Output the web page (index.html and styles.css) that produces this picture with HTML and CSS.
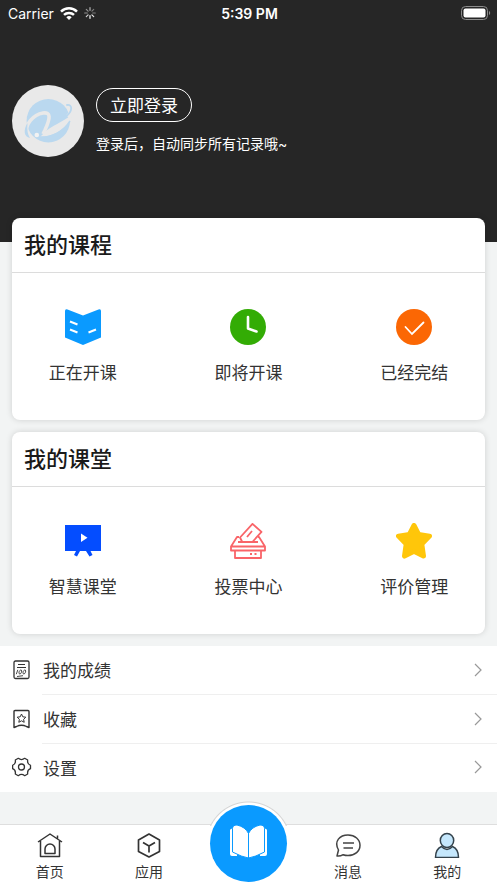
FILE: index.html
```html
<!DOCTYPE html>
<html lang="zh-CN">
<head>
<meta charset="utf-8">
<meta name="viewport" content="width=device-width, initial-scale=1">
<title>我的</title>
<link rel="stylesheet" href="styles.css">
</head>
<body>
<header class="hero">
  <div class="status">
    <div class="status-left">
      <span>Carrier</span>
      <svg width="18" height="13" viewBox="0 0 18 13" fill="none" stroke="#fff" stroke-width="2.5"><path d="M1 4.6a11.5 11.5 0 0 1 16 0M4 7.9a7.2 7.2 0 0 1 10 0"/><path d="M9 13 6.3 10.2a3.9 3.9 0 0 1 5.4 0z" fill="#fff" stroke="none"/></svg>
      <svg width="12" height="12" viewBox="0 0 12 12" stroke="#fff" stroke-width="1.2" stroke-linecap="round"><path d="M6 .7v2.6" opacity=".65"/><path d="m9.7 2.3-1.8 1.8" opacity=".4"/><path d="M11.3 6H8.7" opacity=".4"/><path d="M9.7 9.7 7.9 7.9" opacity=".9"/><path d="M6 11.3V8.7"/><path d="m2.3 9.7 1.8-1.8" opacity=".8"/><path d="M.7 6h2.6" opacity=".5"/><path d="m2.3 2.3 1.8 1.8" opacity=".5"/></svg>
    </div>
    <time class="clock">5:39 PM</time>
    <svg class="battery" width="30" height="14" viewBox="0 0 30 14"><rect x=".5" y=".5" width="26" height="13" rx="4" fill="none" stroke="#8c8c8c"/><rect x="2.5" y="2.5" width="22" height="9" rx="2" fill="#fff"/><path d="M28 5c1.600.500 1.600 3.500 0 4z" fill="#8c8c8c"/></svg>
  </div>
  <div class="profile">
    <svg class="avatar" viewBox="0 0 72 72"><circle cx="36" cy="36" r="36" fill="#e9e9e9"/><circle cx="36.300" cy="35.700" r="21.700" fill="#bad8ef"/><path d="M15 50C12 39 22 29.500 31 28c8-1 7.500 5 2 17l-2 4" fill="none" stroke="#e9e9e9" stroke-width="3.600"/><path d="M28 52C43 51 58 43 61 28C54 36 44 38 34 46z" fill="#e9e9e9"/><path d="M54 20C60 18 63 25 56 32" fill="none" stroke="#e9e9e9" stroke-width="5"/><path d="M55 20C60.500 19 61 26 54 31.500" fill="none" stroke="#bad8ef" stroke-width="1.800" stroke-linecap="round"/><path d="M15.500 38C11 45 12 52 18 53Q14.500 48 15.500 38z" fill="#bad8ef"/><path d="M27 52C40 53 52 46 58 36" fill="none" stroke="#bad8ef" stroke-width="1.500"/><circle cx="24.800" cy="50" r="2.300" fill="#f2f2f2"/></svg>
    <div class="signin">
      <button class="login" type="button">立即登录</button>
      <p>登录后，自动同步所有记录哦~</p>
    </div>
  </div>
</header>
<main>
  <section class="card">
    <h2>我的课程</h2>
    <div class="tiles">
      <a class="tile" href="#ongoing"><svg viewBox="0 0 36 36"><path d="M0 2Q0-.5 2.500.400L18 6.500 33.500.400Q36-.5 36 2V28.500L18 36 0 28.500z" fill="#0a9aff"/><path d="m5 12.500 7.500 3M5 20.500l7.500 3M31 20.500l-7.500 3" stroke="#fff" stroke-width="2"/></svg><span>正在开课</span></a>
      <a class="tile" href="#upcoming"><svg viewBox="0 0 36 36"><circle cx="18" cy="18" r="18" fill="#33ac05"/><path d="M18 8v11.500l8.500 3" fill="none" stroke="#fff" stroke-width="2.600" stroke-linecap="round" stroke-linejoin="round"/></svg><span>即将开课</span></a>
      <a class="tile" href="#finished"><svg viewBox="0 0 36 36"><circle cx="18" cy="18" r="18" fill="#fb6704"/><path d="m9.500 18 6.500 7 11.500-11.500" fill="none" stroke="#fff" stroke-width="1.800" stroke-linecap="round"/></svg><span>已经完结</span></a>
    </div>
  </section>
  <section class="card">
    <h2>我的课堂</h2>
    <div class="tiles">
      <a class="tile" href="#smart"><svg viewBox="0 0 36 36"><path d="M0 2h36v26H25.500l2 4-3 1.500L21 28h-6l-3 5.500L9 32l2-4H0z" fill="#044dff"/><path d="m16 10.500 6.500 4.300-6.500 4.300z" fill="#fff"/></svg><span>智慧课堂</span></a>
      <a class="tile" href="#vote"><svg viewBox="0 0 36 36" fill="none" stroke="#f96468" stroke-width="1.800" stroke-linejoin="round"><path d="M9 14H7L1 23.500h34L29 14h-1M1 23.500v4h34v-4M5 28v7h26v-7M8 19h20"/><path d="M12 18.500 10 14.500 22.500.9l9 8L22.800 18.500M17 14l5-6"/><path d="M20 31h2M24.500 31h2"/></svg><span>投票中心</span></a>
      <a class="tile" href="#review"><svg viewBox="0 0 36 36"><path d="m18 2.500 4.600 8.900 10.900 1.700-7.700 8 1.700 12L18 28.300l-9.500 4.800 1.700-12-7.700-8 10.900-1.700z" fill="#ffc60a" stroke="#ffc60a" stroke-width="5" stroke-linejoin="round"/></svg><span>评价管理</span></a>
    </div>
  </section>
  <nav class="list" aria-label="个人">
    <a href="#scores"><svg class="row-icon" viewBox="0 0 20 20" fill="none" stroke="#333"><rect x="2" y="1" width="15" height="17.500" rx="1.500" stroke-width="1.300"/><path d="M6 4.500h7M5 7.500h9" stroke-width="1.200"/><path d="m5.800 9.800-1.500 4.400M9 10c-2 0-2.800 4-1.200 4S10.500 10 9 10zM13 10c-2 0-2.800 4-1.200 4S14.500 10 13 10zM5 16.500l6-.800" stroke-width=".9"/></svg><span>我的成绩</span><svg class="chevron" viewBox="0 0 8 14"><path d="m1 1 6 6-6 6"/></svg></a>
    <a href="#favorites"><svg class="row-icon" viewBox="0 0 20 20" fill="none" stroke="#333" stroke-linejoin="round"><path d="M3 1.500h13q1 0 1 1v16l-2.500-1q-5-2.600-10 0L2 18.500v-16q0-1 1-1z" stroke-width="1.400"/><path d="m9.500 5 1.300 2.800 3 .4-2.200 2.100.6 3-2.700-1.500-2.700 1.500.6-3-2.200-2.100 3-.4z"/></svg><span>收藏</span><svg class="chevron" viewBox="0 0 8 14"><path d="m1 1 6 6-6 6"/></svg></a>
    <a href="#settings"><svg class="row-icon" viewBox="0 0 20 20" fill="none" stroke="#333" stroke-width="1.300" stroke-linejoin="round"><path d="M6.300 1.300Q9.500 3.800 12.700 1.300L15.700 3Q15 7 18.500 8.300V11.700Q15 13 15.700 17L12.700 18.700Q9.500 16.200 6.300 18.700L3.300 17Q4 13 .6 11.700V8.300Q4 7 3.300 3z"/><circle cx="9.500" cy="10" r="3"/></svg><span>设置</span><svg class="chevron" viewBox="0 0 8 14"><path d="m1 1 6 6-6 6"/></svg></a>
  </nav>
</main>
<nav class="tabs" aria-label="主导航">
  <a href="#home"><svg viewBox="0 0 26 26" fill="none" stroke="#333" stroke-width="1.500" stroke-linejoin="round"><path d="M1 10 13 2l12 8M3.500 9v15.500h19V9M20.500 6.500V3.500"/><path d="M8 21.500V17a5 5 0 0 1 10 0v4.500z"/></svg><span>首页</span></a>
  <a href="#apps"><svg viewBox="0 0 26 26" fill="none" stroke="#333" stroke-width="1.700" stroke-linejoin="round"><path d="m13 2 10.500 6v11.500L13 25 2.500 19.500V8zM7 10.500l6 3.500 6-3.500M13 14v6.500"/></svg><span>应用</span></a>
  <a class="center" href="#courses" aria-label="课程"><span class="disc"><svg viewBox="0 0 37 33" fill="#fff"><path d="M3 3.500Q0 3.500 0 5.500V29Q0 31 2 31H7V3.500zM34 3.500Q37 3.500 37 5.500V29Q37 31 35 31H30V3.500z"/><path d="M2.500 3.500Q2.500 0 7 0Q15.500 2 18.500 8.500V33Q12 32 2.500 27zM34.500 3.500Q34.500 0 30 0Q21.500 2 18.500 8.500V33Q25 32 34.500 27z" stroke="#0a9aff"/></svg></span></a>
  <a href="#messages"><svg viewBox="0 0 26 26" fill="none" stroke="#444" stroke-width="1.500" stroke-linejoin="round"><path d="M2 24l1.500-6C-1.500 9 5 3 13 3c7 0 12 4.500 12 10.300S20 23.500 13 23.500q-2.700 0-4.800-.8Q5 24.500 2 24zM8 11h11M8.500 16H18"/></svg><span>消息</span></a>
  <a href="#me" aria-current="page"><svg viewBox="0 0 26 26" fill="#c5e7fc" stroke="#34424b" stroke-width="1.500" stroke-linejoin="round"><path d="M1.500 25.500Q1.500 17 7.500 14.500Q13 20.500 18.500 14.500 24.500 17 24.500 25.500z"/><ellipse cx="13" cy="8.500" rx="6.700" ry="7"/></svg><span>我的</span></a>
</nav>
</body>
</html>
```
FILE: styles.css
```css
* {
  box-sizing: border-box;
}

body {
  margin: 0;
  min-height: 100vh;
  display: flex;
  flex-direction: column;
  background: #f2f4f4;
  color: #333;
  font-family: Inter, "Noto Sans CJK SC", sans-serif;
}

a {
  color: inherit;
  text-decoration: none;
}

svg {
  display: block;
}

.hero {
  background: #262626;
  color: #fff;
  padding-bottom: 85px;
}

.status {
  display: grid;
  grid-template-columns: 1fr auto 1fr;
  align-items: center;
  height: 26px;
  padding: 0 6px 0 8px;
  font-size: 14px;
}

.status-left {
  display: flex;
  align-items: center;
  gap: 6px;
}

.clock {
  font-weight: 600;
}

.battery {
  justify-self: end;
}

.profile {
  display: flex;
  gap: 12px;
  padding: 59px 12px 0;
}

.avatar {
  width: 72px;
  height: 72px;
}

.signin {
  padding-top: 3px;
}

.login {
  display: block;
  height: 34px;
  padding: 0 13px;
  border: 1px solid #fff;
  border-radius: 17px;
  background: none;
  color: #fff;
  font: 17px/32px "Noto Sans CJK SC", sans-serif;
}

.signin p {
  margin: 12px 0 0;
  font-size: 14px;
  line-height: 20px;
}

main {
  flex: 1;
  margin-top: -24px;
}

.card {
  margin: 0 12px 12px;
  background: #fff;
  border-radius: 8px;
  box-shadow: 0 0 6px rgba(0, 0, 0, 0.15);
}

.card h2 {
  margin: 0;
  padding: 0 12px;
  border-bottom: 1px solid #dcdcdc;
  color: #1a1a1a;
  font-size: 22px;
  font-weight: 500;
  line-height: 54px;
}

.tiles {
  display: grid;
  grid-template-columns: repeat(3, 1fr);
  margin: 0 -12px;
  padding: 36px 0 35px;
}

.tile {
  display: flex;
  flex-direction: column;
  align-items: center;
  gap: 16px;
  font-size: 17px;
  line-height: 24px;
}

.tile svg {
  width: 36px;
  height: 36px;
}

.list {
  background: #fff;
}

.list a {
  display: grid;
  grid-template-columns: 20px 1fr 8px;
  column-gap: 11px;
  align-items: center;
  height: 49px;
  padding: 0 15px 2px 12px;
  font-size: 17px;
  background: linear-gradient(#efefef, #efefef) 42px 100% / 100% 1px no-repeat;
}

.list a:last-child {
  height: 48px;
  background: none;
}

.row-icon {
  width: 20px;
  height: 20px;
}

.chevron {
  width: 8px;
  height: 14px;
  fill: none;
  stroke: #999;
  stroke-width: 1.2;
}

.tabs {
  display: grid;
  grid-template-columns: repeat(5, 1fr);
  height: 59px;
  border-top: 1px solid #dedede;
  background: #fff;
  font-size: 14px;
  line-height: 20px;
}

.tabs a {
  display: flex;
  flex-direction: column;
  align-items: center;
  gap: 4px;
  padding-top: 7px;
}

.tabs a > svg {
  width: 26px;
  height: 26px;
}

.tabs .center {
  position: relative;
  padding: 0;
}

.center::before {
  content: "";
  position: absolute;
  bottom: 57px;
  width: 85px;
  height: 25px;
  background: radial-gradient(circle at 50% 43px, #fff 41px, #d4d4d4 42px, transparent 43px);
}

.disc {
  position: absolute;
  bottom: 1px;
  display: grid;
  place-items: center;
  width: 77px;
  height: 77px;
  border-radius: 50%;
  background: #0a9aff;
}

.disc svg {
  width: 37px;
  height: 33px;
  margin-bottom: 4px;
}
```
